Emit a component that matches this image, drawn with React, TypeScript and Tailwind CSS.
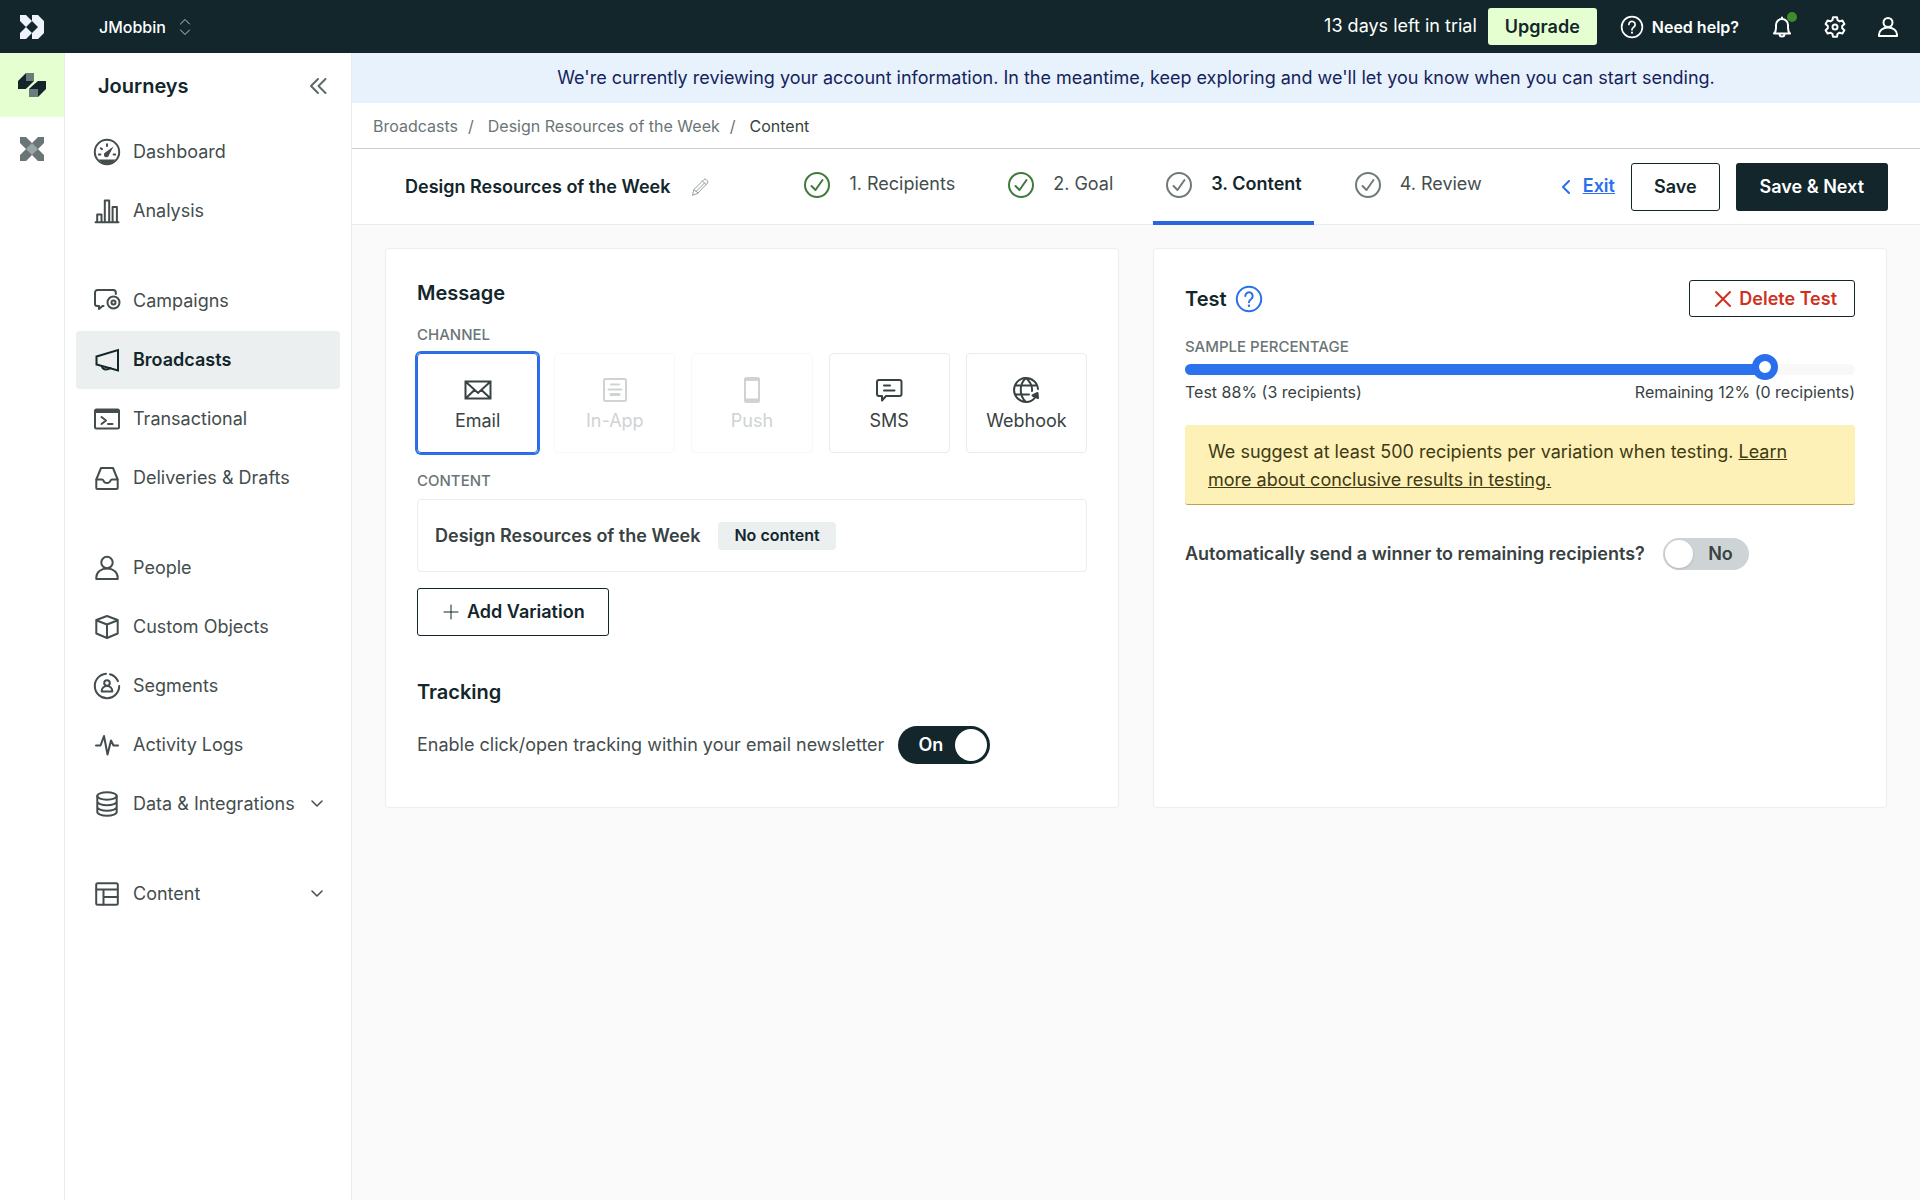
import { useState, type ReactNode } from "react";

function Svg({ size = 28, sw = 2, className = "", children }: { size?: number; sw?: number; className?: string; children: ReactNode }) {
  return (
    <svg
      width={size}
      height={size}
      viewBox={`0 0 ${size} ${size}`}
      fill="none"
      stroke="currentColor"
      strokeWidth={sw}
      strokeLinecap="round"
      strokeLinejoin="round"
      className={`shrink-0 ${className}`}
      aria-hidden="true"
    >
      {children}
    </svg>
  );
}

const icons: Record<string, ReactNode> = {
  dashboard: (
    <>
      <circle cx="14" cy="14" r="12.2" />
      <path d="M5.5 21.5h17l-4 4.2h-9z" fill="currentColor" stroke="none" />
      <path d="M20.5 8.5l-4.4 8.2a2.6 2.6 0 1 1-3.6-2.4z" fill="currentColor" stroke="none" />
      <path d="M5.8 16.5h1.6M7.8 10.2l1.2.9M14 6.3v1.8M20.6 16.5h1.6" />
    </>
  ),
  analysis: <path d="M2.5 25.2h23M4.2 25v-7.5h4.3V25M11.8 25V3.5h4.4V25M19.6 25V10h4.3v15" />,
  campaigns: (
    <>
      <path d="M22.8 7V5.5a2.5 2.5 0 0 0-2.5-2.5H4.5A2.5 2.5 0 0 0 2 5.5V17a2 2 0 0 0 2 2h2v3l3.5-3h1" />
      <circle cx="20.5" cy="15.5" r="6" />
      <circle cx="20.5" cy="15.5" r="2" />
    </>
  ),
  broadcasts: (
    <>
      <path d="M3.5 10.5L25 4v20.5l-21.5-6z" strokeLinejoin="miter" />
      <path d="M9 20.5c.5 2 2 3 4 3s3.5-.8 4.500-1.500" />
    </>
  ),
  transactional: (
    <>
      <rect x="2" y="4.5" width="24" height="19" rx="1.5" />
      <path d="M2.5 6.5h23" strokeWidth="3" />
      <path d="M8.5 12l4.5 3.5L8.5 19M15 19h4.5" />
    </>
  ),
  deliveries: (
    <>
      <path d="M3.3 15.5L8 4h12l4.7 11.5V24a1 1 0 0 1-1 1H4.3a1 1 0 0 1-1-1z" />
      <path d="M3.5 15.5H9a1.5 1.5 0 0 1 1.4 1c.6 1.6 2 2.5 3.6 2.5s3-.9 3.6-2.5a1.5 1.5 0 0 1 1.4-1h5.5" />
    </>
  ),
  people: (
    <>
      <circle cx="14" cy="8.5" r="5.7" />
      <path d="M3.3 25v-1.5c0-5.5 4.7-9 10.7-9s10.7 3.5 10.7 9V25z" />
    </>
  ),
  objects: <path d="M14 3L24.7 7v13.5L14 25 3.3 20.5V7zM3.8 7.5L14 11.5l10.2-4M14 11.5V25" />,
  segments: (
    <>
      <path d="M13 1.8A12.2 12.2 0 1 0 26.2 14M17 2.2a12.2 12.2 0 0 1 8 7" />
      <circle cx="14" cy="11" r="2.8" />
      <path d="M8.7 19.5c0-3.5 2.3-5.5 5.3-5.5s5.3 2 5.3 5.5z" />
    </>
  ),
  activity: <path d="M3 14.5h4.5L11 5l3.5 18.5L18 9.5l2.5 5H25" />,
  data: (
    <>
      <ellipse cx="14" cy="6" rx="9.7" ry="3.7" />
      <path d="M4.3 6v16c0 2 4.3 3.7 9.7 3.7s9.7-1.7 9.7-3.7V6M4.3 11.5c0 2 4.3 3.7 9.7 3.7s9.7-1.7 9.7-3.7M4.3 17c0 2 4.3 3.7 9.7 3.7s9.7-1.7 9.7-3.7" />
    </>
  ),
  content: (
    <>
      <rect x="3.2" y="3.2" width="21.6" height="21.6" rx="1.5" />
      <path d="M3.5 9.5h21M10.5 9.5v15M10.5 17h14" />
    </>
  ),
  email: <path d="M1.5 5.5h25v17h-25zM2 6l12 11L26 6M2 22l8.5-8M26 22l-8.5-8" strokeLinejoin="miter" />,
  inapp: (
    <>
      <rect x="3" y="3" width="22" height="22" rx="1.5" />
      <path d="M10 8.5h8M7.5 13.5h13" />
      <path d="M10 18.5h8" strokeWidth="3" />
    </>
  ),
  push: (
    <>
      <rect x="7" y="2" width="14" height="24" rx="1.5" />
      <path d="M7.5 3.5h13M7.5 24h13" strokeWidth="3" />
    </>
  ),
  sms: (
    <>
      <path d="M4 4h20.5a2 2 0 0 1 2 2v12a2 2 0 0 1-2 2H11l-4 4.5V20H4a2 2 0 0 1-2-2V6a2 2 0 0 1 2-2z" />
      <path d="M9 9.5h6M9 14.5h10.5" />
    </>
  ),
  webhook: (
    <>
      <path d="M26 13A12 12 0 1 0 14 26M14 2c-7 6-7 18 0 24M14 2c4.500 4 6.500 9 6 13M3.5 9.500h21M3.5 18.500H17M14 26c4 0 7-1.500 9-4.500" />
      <path d="M20.5 19.5l5-2.5.5 5z" fill="currentColor" />
    </>
  ),
};

function HelpIcon({ className = "" }: { className?: string }) {
  return (
    <Svg className={className}>
      <circle cx="14" cy="14" r="12.2" />
      <path d="M10.3 11a3.7 3.7 0 1 1 5.9 3c-1.4 1-2.2 1.7-2.2 3.3" />
      <path d="M14 20.6v.2" strokeWidth="2.4" />
    </Svg>
  );
}

const navGroups: { label: string; icon: string; active?: boolean; expandable?: boolean }[][] = [
  [
    { label: "Dashboard", icon: "dashboard" },
    { label: "Analysis", icon: "analysis" },
  ],
  [
    { label: "Campaigns", icon: "campaigns" },
    { label: "Broadcasts", icon: "broadcasts", active: true },
    { label: "Transactional", icon: "transactional" },
    { label: "Deliveries & Drafts", icon: "deliveries" },
  ],
  [
    { label: "People", icon: "people" },
    { label: "Custom Objects", icon: "objects" },
    { label: "Segments", icon: "segments" },
    { label: "Activity Logs", icon: "activity" },
    { label: "Data & Integrations", icon: "data", expandable: true },
  ],
  [{ label: "Content", icon: "content", expandable: true }],
];

const steps = [
  { label: "1. Recipients", done: true },
  { label: "2. Goal", done: true },
  { label: "3. Content", active: true },
  { label: "4. Review" },
];

const channels = [
  { label: "Email", icon: "email" },
  { label: "In-App", icon: "inapp", disabled: true },
  { label: "Push", icon: "push", disabled: true },
  { label: "SMS", icon: "sms" },
  { label: "Webhook", icon: "webhook" },
];

function TopBar() {
  return (
    <header className="flex h-[53px] items-center bg-[#12262b] text-white">
      <a href="#" aria-label="Home" className="ml-5">
        <svg width="24" height="24" viewBox="0 0 24 24" fill="#eef3fb" aria-hidden="true">
          <path d="M0 0h6l6 6-6 6 6 6-6 6H0v-6l6-6-6-6z" />
          <path d="M12 0h6l6 6v12l-6 6h-6v-6l6-6-6-6z" />
        </svg>
      </a>
      <button className="ml-[55px] flex items-center gap-2.5 text-base font-medium">
        JMobbin
        <Svg size={18} sw={1} className="text-[#c3cdcf]">
          <path d="M4.5 6L9 1.5 13.5 6M4.5 12L9 16.5l4.5-4.5" />
        </Svg>
      </button>
      <div className="ml-auto flex items-center">
        <span className="pb-0.5 text-lg">13 days left in trial</span>
        <button className="ml-[11px] h-[37px] rounded-[3px] bg-[#e6ffd0] px-[17px] text-lg font-semibold text-[#12262b]">Upgrade</button>
        <button className="ml-[21px] flex items-center gap-1.5 text-base font-semibold">
          <HelpIcon className="scale-85" />
          Need help?
        </button>
        <button aria-label="Notifications" className="relative ml-[30px]">
          <Svg size={26}>
            <path d="M5 19.5c1.5-1.5 2-3 2-5.5v-3a6 6 0 0 1 12 0v3c0 2.5.5 4 2 5.5zM10.5 20c0 1.5 1 2.5 2.5 2.5s2.5-1 2.5-2.5M13 5V3.5" />
          </Svg>
          <span className="absolute -top-0.5 -right-0.5 size-2.5 rounded-full bg-[#3c8c2c]" />
        </button>
        <button aria-label="Settings" className="ml-[27px]">
          <Svg size={26}>
            <path d="M11 3.3h4l.6 2.9 2 1.2 2.8-1 2 3.5-2.2 2v2.3l2.2 2-2 3.4-2.8-.9-2 1.1-.6 3h-4l-.6-3-2-1.1-2.8.9-2-3.4 2.2-2v-2.3l-2.2-2 2-3.5 2.8 1 2-1.2z" />
            <circle cx="13" cy="13" r="2.5" />
          </Svg>
        </button>
        <button aria-label="Account" className="mr-[19px] ml-[27px]">
          <Svg size={26}>
            <circle cx="13" cy="8.5" r="4.5" />
            <path d="M4 22v-1.5c0-4 4-7 9-7s9 3 9 7V22z" />
          </Svg>
        </button>
      </div>
    </header>
  );
}

function Rail() {
  return (
    <nav aria-label="Products" className="w-[65px] shrink-0 border-r border-[#e9ecec] bg-white">
      <a href="#" aria-label="Journeys" className="flex h-16 items-center justify-center bg-[#e6ffd0]">
        <svg width="28" height="26" viewBox="0 0 28 26" aria-hidden="true">
          <path d="M8 1h8v8l-8 8H0V9z" fill="#12262b" />
          <path d="M19 9h9v8l-8 8h-9v-8z" fill="#12262b" />
          <path d="M8 1h8v8H8zM11 17h9v8h-9z" fill="#6d7b7b" />
          <path d="M8.5 17.5L19.500 8.500" stroke="#e6ffd0" strokeWidth="1.5" />
        </svg>
      </a>
      <a href="#" aria-label="Data Pipelines" className="flex h-16 items-center justify-center">
        <svg width="24" height="24" viewBox="0 0 24 24" aria-hidden="true">
          <path d="M0 0h6l6 6 6-6h6v6l-6 6 6 6v6h-6l-6-6-6 6H0v-6l6-6-6-6z" fill="#6a7575" />
          <path d="M12 6l6 6-6 6-6-6z" fill="#9ba5a5" />
        </svg>
      </a>
    </nav>
  );
}

function Sidebar() {
  return (
    <aside className="w-[287px] shrink-0 border-r border-[#e9ecec] bg-white px-[11px]">
      <div className="flex h-[70px] items-center justify-between pr-3 pb-1 pl-[22px]">
        <h2 className="text-xl font-semibold text-[#12262b]">Journeys</h2>
        <button aria-label="Collapse sidebar" className="text-[#5e6868]">
          <Svg size={20}>
            <path d="M10 3l-7 7 7 7M17.5 3l-7 7 7 7" />
          </Svg>
        </button>
      </div>
      <nav aria-label="Journeys" className="flex flex-col gap-8">
        {navGroups.map((group, i) => (
          <ul key={i} className="flex flex-col gap-px">
            {group.map((item) => (
              <li key={item.label}>
                <a
                  href="#"
                  className={`flex h-[58px] items-center gap-3 rounded-[4px] px-[17px] text-lg ${
                    item.active ? "bg-[#ebeff0] font-semibold text-[#12262b]" : "text-[#444d4d]"
                  }`}
                >
                  <Svg>{icons[item.icon]}</Svg>
                  <span className="whitespace-nowrap">{item.label}</span>
                  {item.expandable && (
                    <Svg size={12} sw={1} className="ml-auto">
                      <path d="M1 3l5 5 5-5" strokeWidth="1.5" />
                    </Svg>
                  )}
                </a>
              </li>
            ))}
          </ul>
        ))}
      </nav>
    </aside>
  );
}

function Breadcrumbs() {
  return (
    <nav aria-label="Breadcrumb" className="flex h-[46px] items-center border-b border-[#c9cecf] bg-white px-[21px] text-base text-[#6b7575]">
      <a href="#">Broadcasts</a>
      <span className="mr-3.5 ml-2.5">/</span>
      <a href="#">Design Resources of the Week</a>
      <span className="mr-3.5 ml-2.5">/</span>
      <span className="text-[#384242]">Content</span>
    </nav>
  );
}

function Toolbar() {
  return (
    <div className="flex h-[76px] items-stretch border-b border-[#e9ecec] bg-white pr-8 pl-[53px]">
      <div className="flex items-center gap-5">
        <h1 className="text-lg font-semibold whitespace-nowrap text-[#12262b]">Design Resources of the Week</h1>
        <button aria-label="Rename" className="text-[#959e9e]">
          <Svg size={20} sw={1}>
            <path d="M2.5 18l1.5-5.5L14 2.5a1.5 1.5 0 0 1 2 0L17.5 4a1.5 1.5 0 0 1 0 2L8 16zM12.5 4L16 7.5M4 12.5L8 16M14.5 6L6 14.5" />
          </Svg>
        </button>
      </div>
      <ol className="ml-4 flex flex-1 justify-center gap-7">
        {steps.map((step) => (
          <li key={step.label}>
            <button
              aria-current={step.active ? "step" : undefined}
              className={`flex h-[76px] items-center gap-[18px] border-b-4 px-3 text-lg whitespace-nowrap ${
                step.active ? "border-[#2a66dd] font-semibold text-[#12262b]" : "border-transparent text-[#444d4d]"
              }`}
            >
              <Svg className={step.done ? "text-[#3f7a3c]" : "text-[#717979]"}>
                <circle cx="14" cy="14" r="12" />
                <path d="M8.5 15l4 4 7-10" />
              </Svg>
              <span className="pb-0.5">{step.label}</span>
            </button>
          </li>
        ))}
      </ol>
      <div className="flex items-center">
        <a href="#" className="flex items-center gap-2.5 text-lg font-semibold text-[#2a6fec]">
          <Svg size={14}>
            <path d="M10 1L4 7l6 6" />
          </Svg>
          <span className="pb-0.5 underline">Exit</span>
        </a>
        <button className="ml-4 h-12 rounded-[3px] border border-[#12262b] bg-white px-[22px] text-lg font-semibold text-[#12262b]">Save</button>
        <button className="ml-4 h-12 rounded-[3px] bg-[#12262b] px-6 text-lg font-semibold whitespace-nowrap text-white">Save & Next</button>
      </div>
    </div>
  );
}

function MessageCard() {
  const [channel, setChannel] = useState("Email");
  const [tracking, setTracking] = useState(true);

  return (
    <section className="rounded-[4px] border border-[#eceeee] bg-white px-[31px] pt-7 pb-[43px]">
      <h2 className="text-xl leading-8 font-semibold text-[#12262b]">Message</h2>
      <h3 className="mt-3.5 text-[15px] leading-6 font-medium text-[#6b7575]">CHANNEL</h3>
      <div className="mt-1.5 grid grid-cols-5 gap-4">
        {channels.map((c) => (
          <button
            key={c.label}
            disabled={c.disabled}
            aria-pressed={channel === c.label}
            onClick={() => setChannel(c.label)}
            className={`flex h-[100px] flex-col items-center justify-center gap-[3px] rounded-[4px] border pt-1 text-lg text-[#384242] disabled:border-[#f7f8f8] disabled:text-[#cfd3d3] ${
              channel === c.label ? "border-[#2a66dd] ring-2 ring-[#2a6fec]" : "border-[#e9ecec]"
            }`}
          >
            <Svg>{icons[c.icon]}</Svg>
            {c.label}
          </button>
        ))}
      </div>
      <h3 className="mt-4 text-[15px] leading-6 font-medium text-[#6b7575]">CONTENT</h3>
      <div className="mt-1.5 flex h-[73px] items-center gap-[18px] rounded-[4px] border border-[#eceeee] px-[17px]">
        <span className="text-lg font-semibold text-[#384242]">Design Resources of the Week</span>
        <span className="h-7 rounded-[4px] bg-[#ebeff0] px-4 text-base leading-[26px] font-semibold text-[#12262b]">No content</span>
      </div>
      <button className="mt-4 flex h-12 items-center gap-1.5 rounded-[3px] border border-[#12262b] px-[23px] text-lg font-semibold text-[#12262b]">
        <Svg size={20} sw={1}>
          <path d="M10 3v14M3 10h14" />
        </Svg>
        Add Variation
      </button>
      <h2 className="mt-10 text-xl leading-8 font-semibold text-[#12262b]">Tracking</h2>
      <label className="mt-[18px] flex cursor-pointer items-center gap-3.5 text-lg text-[#444d4d]">
        Enable click/open tracking within your email newsletter
        <input type="checkbox" role="switch" className="peer sr-only" checked={tracking} onChange={(e) => setTracking(e.target.checked)} />
        <span className="flex h-[38px] w-[92px] flex-row-reverse items-center justify-between rounded-full bg-[#8f9898] py-[3px] pr-5 pl-[3px] font-semibold text-white peer-checked:flex-row peer-checked:bg-[#12262b] peer-checked:pr-[3px] peer-checked:pl-5">
          {tracking ? "On" : "Off"}
          <span className="size-8 rounded-full bg-white" />
        </span>
      </label>
    </section>
  );
}

function TestCard() {
  const [sample, setSample] = useState(88);
  const [autoSend, setAutoSend] = useState(false);

  return (
    <section className="rounded-[4px] border border-[#eceeee] bg-white px-[31px] pt-[31px] pb-[43px]">
      <div className="flex items-center">
        <h2 className="text-xl font-semibold text-[#12262b]">Test</h2>
        <button aria-label="About tests" className="ml-2 text-[#2a6fec]">
          <HelpIcon />
        </button>
        <button className="ml-auto flex h-[37px] items-center gap-1.5 rounded-[3px] border border-[#12262b] pr-[17px] pl-[23px] text-lg font-semibold text-[#d0311e]">
          <Svg size={20}>
            <path d="M3 3l14 14M17 3L3 17" />
          </Svg>
          Delete Test
        </button>
      </div>
      <label htmlFor="sample" className="mt-[18px] block text-[15px] leading-6 font-medium text-[#6b7575]">
        SAMPLE PERCENTAGE
      </label>
      <input
        id="sample"
        type="range"
        value={sample}
        onChange={(e) => setSample(Number(e.target.value))}
        style={{ backgroundImage: `linear-gradient(to right, #2b72ec ${sample}%, #f8f8f9 ${sample}%)` }}
        className="mt-[5px] block h-[11px] w-full cursor-pointer appearance-none rounded-full [&::-webkit-slider-runnable-track]:h-[11px] [&::-webkit-slider-thumb]:-mt-2.5 [&::-webkit-slider-thumb]:size-[26px] [&::-webkit-slider-thumb]:appearance-none [&::-webkit-slider-thumb]:rounded-full [&::-webkit-slider-thumb]:border-[7px] [&::-webkit-slider-thumb]:border-[#2a6fec] [&::-webkit-slider-thumb]:bg-white"
      />
      <div className="mt-[5px] flex justify-between text-base text-[#384242]">
        <span>Test {sample}% (3 recipients)</span>
        <span>Remaining {100 - sample}% (0 recipients)</span>
      </div>
      <p className="mt-[21px] rounded-[3px] border-b border-[#b9a64a] bg-[#fdf1b8] px-[23px] pt-[13px] pb-2.5 text-lg leading-7 text-[#3f3a12]">
        We suggest at least 500 recipients per variation when testing.{" "}
        <a href="#" className="underline">
          Learn more about conclusive results in testing.
        </a>
      </p>
      <label className="mt-[33px] flex cursor-pointer items-center gap-[18px] text-lg font-semibold text-[#384242]">
        Automatically send a winner to remaining recipients?
        <input type="checkbox" role="switch" className="peer sr-only" checked={autoSend} onChange={(e) => setAutoSend(e.target.checked)} />
        <span className="flex h-8 w-[86px] items-center justify-between rounded-full bg-[#ced4d5] py-0.5 pr-4 pl-0.5 peer-checked:flex-row-reverse peer-checked:bg-[#12262b] peer-checked:pr-0.5 peer-checked:pl-4 peer-checked:text-white">
          <span className="size-7 rounded-full bg-white shadow" />
          {autoSend ? "Yes" : "No"}
        </span>
      </label>
    </section>
  );
}

export default function App() {
  return (
    <div className="flex min-h-screen flex-col bg-[#fafafa] font-[Inter,sans-serif]">
      <TopBar />
      <div className="flex flex-1">
        <Rail />
        <Sidebar />
        <main className="min-w-0 flex-1">
          <p className="flex h-[50px] items-center justify-center bg-[#e8f2fd] text-lg text-[#14235c]">
            We're currently reviewing your account information. In the meantime, keep exploring and we'll let you know when you can start sending.
          </p>
          <Breadcrumbs />
          <Toolbar />
          <div className="grid grid-cols-2 gap-[34px] px-[33px] py-[23px]">
            <MessageCard />
            <TestCard />
          </div>
        </main>
      </div>
    </div>
  );
}
